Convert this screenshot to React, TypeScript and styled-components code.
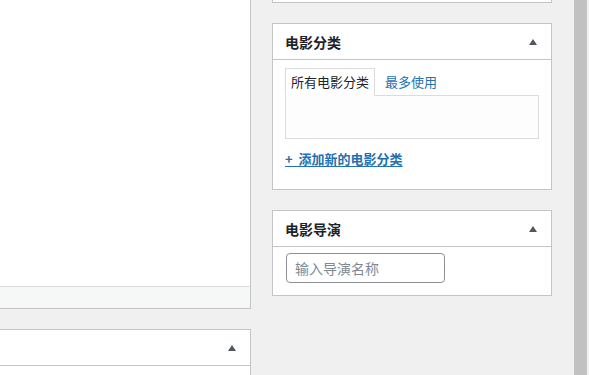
import { FC } from "react";
import styled, { createGlobalStyle } from "styled-components";

const GlobalStyle = createGlobalStyle`
  html, body {
    margin: 0;
    padding: 0;
    overflow: hidden;
    background: #f0f0f1;
  }
  body {
    font-family: "Noto Sans CJK SC", "Noto Sans", sans-serif;
    font-size: 13px;
    color: #1d2327;
  }
`;

const Page = styled.div`
  display: flex;
  height: 375px;
  width: 589px;
  overflow: hidden;
  background: #f0f0f1;
`;

const MainColumn = styled.div`
  width: 251px;
  display: flex;
  flex-direction: column;
  flex-shrink: 0;

  & > * {
    flex-shrink: 0;
  }
`;

const EditorArea = styled.div`
  height: 286px;
  background: #fff;
  border-right: 1px solid #c3c4c7;
`;

const StatusBar = styled.div`
  height: 21px;
  background: #f6f7f7;
  border-top: 1px solid #dcdcde;
  border-bottom: 1px solid #c3c4c7;
  border-right: 1px solid #c3c4c7;
`;

const Sidebar = styled.div`
  width: 280px;
  margin-left: 21px;
  display: flex;
  flex-direction: column;
  flex-shrink: 0;
  gap: 20px;
`;

const Postbox = styled.div<{ $open?: boolean }>`
  background: #fff;
  border: 1px solid #c3c4c7;
  border-left-width: ${(p) => (p.$open ? "0" : "1px")};
  margin-top: ${(p) => (p.$open ? "20px" : "0")};
  min-height: ${(p) => (p.$open ? "60px" : "0")};
`;

const TopStub = styled.div`
  height: 2px;
  background: #fff;
  border: 1px solid #c3c4c7;
  border-top: none;
`;

const Header = styled.div`
  display: flex;
  align-items: center;
  height: 35px;
  border-bottom: 1px solid #c3c4c7;
`;

const Title = styled.h2`
  flex: 1;
  margin: 0;
  padding: 0 12px;
  font-size: 14px;
  font-weight: 600;
  line-height: 20px;
  color: #1d2327;
`;

const Toggle = styled.span`
  width: 36px;
  height: 35px;
  display: flex;
  align-items: center;
  justify-content: center;

  &::before {
    content: "";
    border-left: 4px solid transparent;
    border-right: 4px solid transparent;
    border-bottom: 6px solid #50575e;
  }
`;

const Inside = styled.div<{ $top: number }>`
  padding: ${(p) => p.$top}px 12px 12px;
`;

const Tabs = styled.div`
  display: flex;
  align-items: flex-end;
  position: relative;
  z-index: 1;
  margin-bottom: -1px;
`;

const Tab = styled.span<{ $active?: boolean }>`
  padding: 3px 5px 4px;
  line-height: 19px;
  border: 1px solid ${(p) => (p.$active ? "#dcdcde" : "transparent")};
  border-bottom-color: ${(p) => (p.$active ? "#fff" : "transparent")};
  background: ${(p) => (p.$active ? "#fff" : "transparent")};
  color: ${(p) => (p.$active ? "#1d2327" : "#2271b1")};
  margin-right: 4px;
`;

const TabsPanel = styled.div`
  height: 42px;
  border: 1px solid #dcdcde;
  background: #fdfdfd;
`;

const AddLink = styled.a`
  display: inline-block;
  margin: 10px 0 9px;
  line-height: 19px;
  font-weight: 600;
  color: #2271b1;
  text-decoration: underline;
  text-underline-offset: 2px;
  white-space: pre;
  word-spacing: 3px;
`;

const NameInput = styled.input`
  box-sizing: border-box;
  width: 159px;
  height: 30px;
  margin: 0 0 0 1px;
  padding: 0 8px;
  border: 1px solid #8c8f94;
  border-radius: 4px;
  font-family: inherit;
  font-size: 14px;
  color: #2c3338;
  background: #fff;

  &::placeholder {
    color: #7e8993;
  }
`;

const Spacer = styled.div`
  flex: 1;
`;

const ScrollThumb = styled.div`
  width: 13px;
  flex-shrink: 0;
  background: #c1c1c1;
`;

const ScrollEdge = styled.div`
  width: 2px;
  flex-shrink: 0;
  background: #f1f1f1;
`;

const CategoryBox: FC = () => (
  <Postbox>
    <Header>
      <Title>电影分类</Title>
      <Toggle />
    </Header>
    <Inside $top={8}>
      <Tabs>
        <Tab $active>所有电影分类</Tab>
        <Tab>最多使用</Tab>
      </Tabs>
      <TabsPanel />
      <AddLink href="#">{"+ 添加新的电影分类"}</AddLink>
    </Inside>
  </Postbox>
);

const DirectorBox: FC = () => (
  <Postbox>
    <Header>
      <Title>电影导演</Title>
      <Toggle />
    </Header>
    <Inside $top={6}>
      <NameInput placeholder="输入导演名称" />
    </Inside>
  </Postbox>
);

const App: FC = () => (
  <>
    <GlobalStyle />
    <Page>
      <MainColumn>
        <EditorArea />
        <StatusBar />
        <Postbox $open>
          <Header>
            <Title />
            <Toggle />
          </Header>
        </Postbox>
      </MainColumn>
      <Sidebar>
        <TopStub />
        <CategoryBox />
        <DirectorBox />
      </Sidebar>
      <Spacer />
      <ScrollThumb />
      <ScrollEdge />
    </Page>
  </>
);

export default App;
